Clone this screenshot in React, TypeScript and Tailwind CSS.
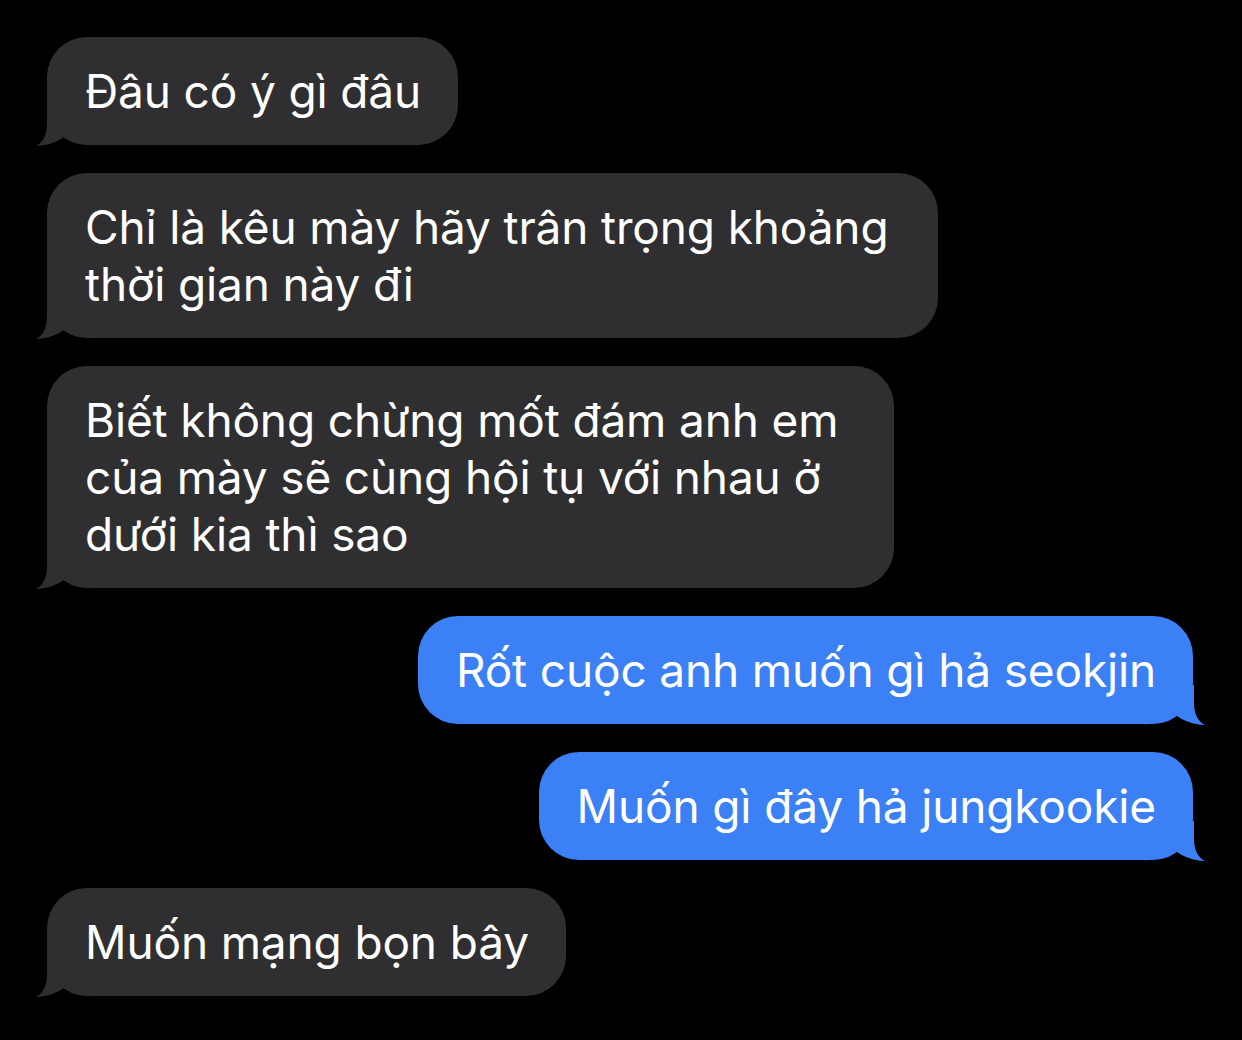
const font = { fontFamily: "Inter, 'Noto Sans', sans-serif" };

type Msg = { from: "them" | "me"; lines: string[]; pr?: string };

const messages: Msg[] = [
  { from: "them", lines: ["Đâu có ý gì đâu"] },
  { from: "them", lines: ["Chỉ là kêu mày hãy trân trọng khoảng", "thời gian này đi"], pr: "pr-[50px]" },
  { from: "them", lines: ["Biết không chừng mốt đám anh em", "của mày sẽ cùng hội tụ với nhau ở", "dưới kia thì sao"], pr: "pr-[56px]" },
  { from: "me", lines: ["Rốt cuộc anh muốn gì hả seokjin"] },
  { from: "me", lines: ["Muốn gì đây hả jungkookie"] },
  { from: "them", lines: ["Muốn mạng bọn bây"] },
];

// iMessage style tail, drawn for the left side and mirrored for the right
const Tail = ({ side, color }: { side: "left" | "right"; color: string }) => (
  <svg
    width="60"
    height="40"
    viewBox="0 0 60 40"
    className={
      side === "left"
        ? "absolute -left-[11px] -bottom-px"
        : "absolute -right-[12px] -bottom-px -scale-x-100"
    }
  >
    <path
      d="M11 0 L11 18 C11 30 6 37 0 40 C12 40 24 35 33 27 C40 34 50 38 60 39.5 L60 0 Z"
      fill={color}
    />
  </svg>
);

const Bubble = ({ msg }: { msg: Msg }) => {
  const mine = msg.from === "me";
  const color = mine ? "#3b80f5" : "#2f2f31";
  return (
    <div className={mine ? "flex justify-end" : "flex justify-start"}>
      <div
        className={`relative rounded-[40px] pl-[38px] ${msg.pr ?? "pr-[37px]"} pt-[26px] pb-[25px] text-white text-[46px] leading-[57px] tracking-[-0.15px] ${
          mine ? "bg-[#3b80f5]" : "bg-[#2f2f31]"
        }`}
      >
        <Tail side={mine ? "right" : "left"} color={color} />
        <div className="relative whitespace-nowrap">
          {msg.lines.map((l, i) => (
            <div key={i}>{l}</div>
          ))}
        </div>
      </div>
    </div>
  );
};

export default function App() {
  return (
    <div className="min-h-[1040px] w-[1242px] bg-black pt-[37px] pl-[47px] pr-[49px]" style={font}>
      <div className="flex flex-col gap-[28px]">
        {messages.map((m, i) => (
          <Bubble key={i} msg={m} />
        ))}
      </div>
    </div>
  );
}
